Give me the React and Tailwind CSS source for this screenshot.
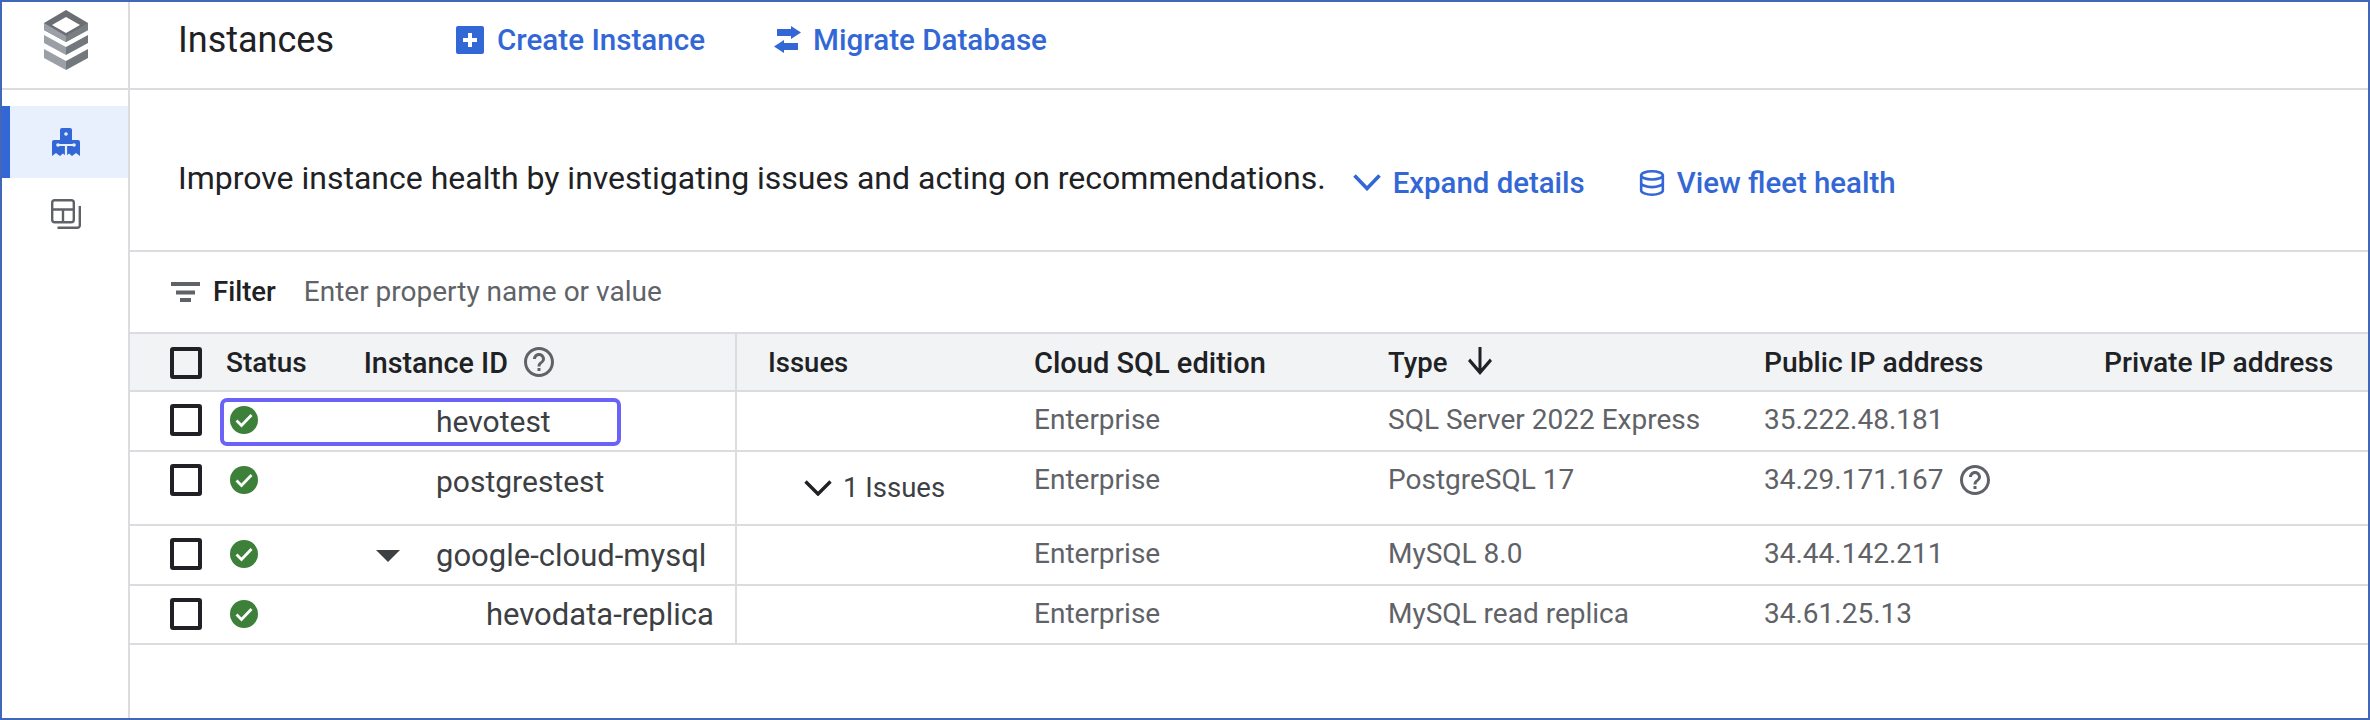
const font = { fontFamily: 'Roboto, sans-serif' };

const HelpIcon = ({ className }) => (
  <svg viewBox="2 2 20 20" className={className} fill="#5f6368">
    <path d="M11 18h2v-2h-2v2zm1-16C6.48 2 2 6.48 2 12s4.48 10 10 10 10-4.48 10-10S17.52 2 12 2zm0 18c-4.41 0-8-3.59-8-8s3.59-8 8-8 8 3.59 8 8-3.59 8-8 8zm0-14c-2.21 0-4 1.79-4 4h2c0-1.1.9-2 2-2s2 .9 2 2c0 2-3 1.75-3 5h2c0-2.25 3-2.5 3-5 0-2.21-1.79-4-4-4z" />
  </svg>
);

const Logo = () => (
  <svg viewBox="0 0 44 60" className="h-[60px] w-[44px]">
    <path d="M22 0L44 13V20L22 32L0 20V13Z" fill="#6b6f73" />
    <path d="M0 13L22 26V32L0 20Z" fill="#9aa0a6" />
    <path d="M44 13L22 26V32L44 20Z" fill="#7a7f84" />
    <path d="M22 7L36 15L22 23L8 15Z" fill="#fff" />
    <path d="M0 25L22 37V45L0 33Z" fill="#9aa0a6" />
    <path d="M44 25L22 37V45L44 33Z" fill="#73787c" />
    <path d="M0 39L22 51V60L0 48Z" fill="#9aa0a6" />
    <path d="M44 39L22 51V60L44 48Z" fill="#73787c" />
  </svg>
);

const FleetIcon = () => (
  <svg viewBox="0 0 28 28" className="h-7 w-7">
    <path d="M8 2a2 2 0 012-2h8a2 2 0 012 2v14H8z" fill="#3367d6" />
    <circle cx="14" cy="6" r="1.800" fill="#e8f0fe" />
    <path d="M0 14a2 2 0 012-2h6v16l-4-3-4 3zM28 14a2 2 0 00-2-2h-6v16l4-3 4 3z" fill="#3367d6" />
    <path d="M8 15h12v13l-3-2.500-3 2.500-3-2.500-3 2.500z" fill="#3367d6" />
    <path d="M6 17h16M14 17v11" stroke="#e8f0fe" strokeWidth="2.200" fill="none" />
    <circle cx="6" cy="17" r="1.800" fill="#e8f0fe" />
    <circle cx="22" cy="17" r="1.800" fill="#e8f0fe" />
  </svg>
);

const LayoutIcon = () => (
  <svg viewBox="0 0 30 30" className="h-[30px] w-[30px]" fill="none" stroke="#5f6368" strokeWidth="2.400">
    <rect x="1.200" y="1.200" width="21.600" height="22" rx="2.500" />
    <path d="M1.200 10.500H22.800M12 10.500V23" />
    <path d="M28.800 7V26.500a2.300 2.300 0 01-2.300 2.300H6.500" />
  </svg>
);

const StatusIcon = () => (
  <svg viewBox="0 0 28 28" className="h-7 w-7 shrink-0">
    <circle cx="14" cy="14" r="14" fill="#3c8039" />
    <path d="M6.500 14.500l5 5 10-10.500" stroke="#fff" strokeWidth="2.800" fill="none" />
  </svg>
);

const Checkbox = () => (
  <div className="h-8 w-8 shrink-0 rounded-[3px] border-[4px] border-[#202124]" />
);

const rows = [
  { name: 'hevotest', edition: 'Enterprise', type: 'SQL Server 2022 Express', ip: '35.222.48.181', height: 'h-[60px]', focused: true },
  { name: 'postgrestest', edition: 'Enterprise', type: 'PostgreSQL 17', ip: '34.29.171.167', height: 'h-[74px]', issues: true, help: true },
  { name: 'google-cloud-mysql', edition: 'Enterprise', type: 'MySQL 8.0', ip: '34.44.142.211', height: 'h-[60px]', parent: true },
  { name: 'hevodata-replica', edition: 'Enterprise', type: 'MySQL read replica', ip: '34.61.25.13', height: 'h-[59px]', child: true },
];

const InstanceRow = ({ row }) => (
  <div className={`flex border-b-2 border-[#dadce0] text-[28px] text-[#5f6368] ${row.height}`}>
    <div className="relative flex w-[607px] shrink-0 border-r-2 border-[#dadce0] pl-10 pt-[12px]">
      <Checkbox />
      <div className="ml-[28px] pt-[2px]">
        <StatusIcon />
      </div>
      {row.parent && (
        <svg viewBox="0 0 24 12" className="ml-[118px] mt-[12px] h-3 w-6 shrink-0" fill="#3c4043">
          <path d="M0 0H24L12 12Z" />
        </svg>
      )}
      <span
        className={`text-[#3c4043] ${
          row.parent ? 'ml-[36px] text-[31px]' : row.child ? 'ml-[228px] text-[31px]' : 'ml-[178px] text-[30px]'
        } ${row.child ? 'pt-0' : 'pt-[1px]'} leading-[34px]`}
      >
        {row.name}
      </span>
      {row.focused && (
        <div className="absolute left-[90px] top-[6px] h-[48px] w-[401px] rounded-[7px] border-4 border-[#6b63f7]" />
      )}
    </div>
    <div className="w-[297px] shrink-0 pl-[67px] pt-[18px]">
      {row.issues && (
        <div className="flex items-center text-[27.500px] text-[#3c4043]">
          <svg viewBox="0 0 28 16" className="h-4 w-7" fill="none" stroke="#202124" strokeWidth="3.400">
            <path d="M1.500 1.500L14 14L26.500 1.500" />
          </svg>
          <span className="ml-[11px] pt-[1px] leading-[34px]">1 Issues</span>
        </div>
      )}
    </div>
    <div className="w-[354px] shrink-0 pt-[11px] leading-[34px]">{row.edition}</div>
    <div className="w-[376px] shrink-0 pt-[11px] leading-[34px]">{row.type}</div>
    <div className="flex w-[340px] shrink-0 items-start pt-[11px] leading-[34px]">
      <span>{row.ip}</span>
      {row.help && <HelpIcon className="ml-[16px] mt-[2px] h-[30px] w-[30px]" />}
    </div>
    <div className="flex-1" />
  </div>
);

export default function App() {
  return (
    <div className="flex h-[720px] w-[2370px] border-2 border-[#4267b8] bg-white text-[28px]" style={font}>
      <aside className="flex w-[128px] shrink-0 flex-col border-r-2 border-[#dadce0]">
        <div className="flex h-[86px] shrink-0 justify-center pl-[2px] pt-2">
          <Logo />
        </div>
        <div className="h-[2px] w-[128px] bg-[#dadce0]" />
        <nav className="mt-4 flex flex-col">
          <div className="flex h-[72px] items-center justify-center border-l-8 border-[#3367d6] bg-[#e8f0fe] pr-[6px]">
            <FleetIcon />
          </div>
          <div className="flex justify-center pl-[2px] pt-[21px]">
            <LayoutIcon />
          </div>
        </nav>
      </aside>

      <main className="flex min-w-0 flex-1 flex-col">
        <header className="flex h-[86px] shrink-0 items-center pb-[10px] pl-12 text-[29.600px]">
          <h1 className="text-[36px] font-normal text-[#202124]">Instances</h1>
          <button className="ml-[122px] flex items-center text-[#3367d6]">
            <span className="flex h-7 w-7 items-center justify-center rounded-[2px] bg-[#3367d6]">
              <svg viewBox="0 0 14 14" className="h-[14px] w-[14px]" fill="#fff">
                <path d="M5 0h4v5h5v4H9v5H5V9H0V5h5z" />
              </svg>
            </span>
            <span className="ml-[13px] font-medium">Create Instance</span>
          </button>
          <button className="ml-[69px] flex items-center text-[#3367d6]">
            <svg viewBox="0 0 27 27" className="h-[27px] w-[27px]" fill="#3367d6">
              <path d="M3 3H17V0L27 6.500L17 13V10H3ZM24 17H10V14L0 20.500L10 27V24H24Z" />
            </svg>
            <span className="ml-3 font-medium">Migrate Database</span>
          </button>
        </header>
        <div className="h-[2px] bg-[#dadce0]" />

        <section className="flex h-[162px] shrink-0 items-center border-b-2 border-[#dadce0] pl-12 pt-4 text-[29.400px] text-[#202124]">
          <p className="text-[32px]">Improve instance health by investigating issues and acting on recommendations.</p>
          <button className="ml-[27px] mt-[10px] flex items-center font-medium text-[#3367d6]">
            <svg viewBox="0 0 28 17" className="h-[17px] w-7" fill="none" stroke="#3367d6" strokeWidth="3.600">
              <path d="M1.500 1.500L14 14.500L26.500 1.500" />
            </svg>
            <span className="ml-3">Expand details</span>
          </button>
          <button className="ml-[54px] mt-[10px] flex items-center font-medium text-[#3367d6]">
            <svg viewBox="0 0 24 24" className="h-[26px] w-[26px]" fill="none" stroke="#3367d6" strokeWidth="2.400">
              <ellipse cx="12" cy="5" rx="10" ry="3.800" />
              <path d="M2 5v14c0 1.900 4.500 3.800 10 3.800s10-1.900 10-3.800V5M2 12c0 1.900 4.500 3.800 10 3.800s10-1.900 10-3.800" />
            </svg>
            <span className="ml-3">View fleet health</span>
          </button>
        </section>

        <div className="flex h-[80px] shrink-0 items-center pl-[41px]">
          <svg viewBox="0 0 29 20" className="h-5 w-[29px]" fill="#5f6368">
            <path d="M0 0H29V4H0ZM5 8.500H24V12.500H5ZM9 16H20V20H9Z" />
          </svg>
          <span className="ml-[13px] text-[27.500px] font-medium text-[#202124]">Filter</span>
          <span className="ml-[28px] text-[#5f6368]">Enter property name or value</span>
        </div>

        <div className="flex h-[60px] shrink-0 border-y-2 border-[#dadce0] bg-[#f1f3f4] font-medium text-[#202124]">
          <div className="flex w-[607px] shrink-0 items-start border-r-2 border-[#dadce0] pl-10 pt-[13px]">
            <Checkbox />
            <span className="ml-6 text-[28px] leading-[32px]">Status</span>
            <span className="ml-[57px] text-[28.700px] leading-[32px]">Instance ID</span>
            <HelpIcon className="ml-4 h-[30px] w-[30px]" />
          </div>
          <div className="w-[297px] shrink-0 pl-[31px] pt-[13px] text-[27.500px] leading-[32px]">Issues</div>
          <div className="w-[354px] shrink-0 pt-[13px] text-[29px] leading-[32px]">Cloud SQL edition</div>
          <div className="flex w-[376px] shrink-0 items-start pt-[13px] text-[27.500px] leading-[32px]">
            <span>Type</span>
            <svg viewBox="4 4 16 16" className="ml-[21px] h-7 w-6" fill="#202124" preserveAspectRatio="none">
              <path d="M20 12l-1.410-1.410L13 16.170V4h-2v12.170l-5.580-5.590L4 12l8 8 8-8z" />
            </svg>
          </div>
          <div className="w-[340px] shrink-0 pt-[13px] text-[28.200px] leading-[32px]">Public IP address</div>
          <div className="flex-1 pt-[13px] text-[28.200px] leading-[32px]">Private IP address</div>
        </div>

        {rows.map((row) => (
          <InstanceRow key={row.name} row={row} />
        ))}
      </main>
    </div>
  );
}
